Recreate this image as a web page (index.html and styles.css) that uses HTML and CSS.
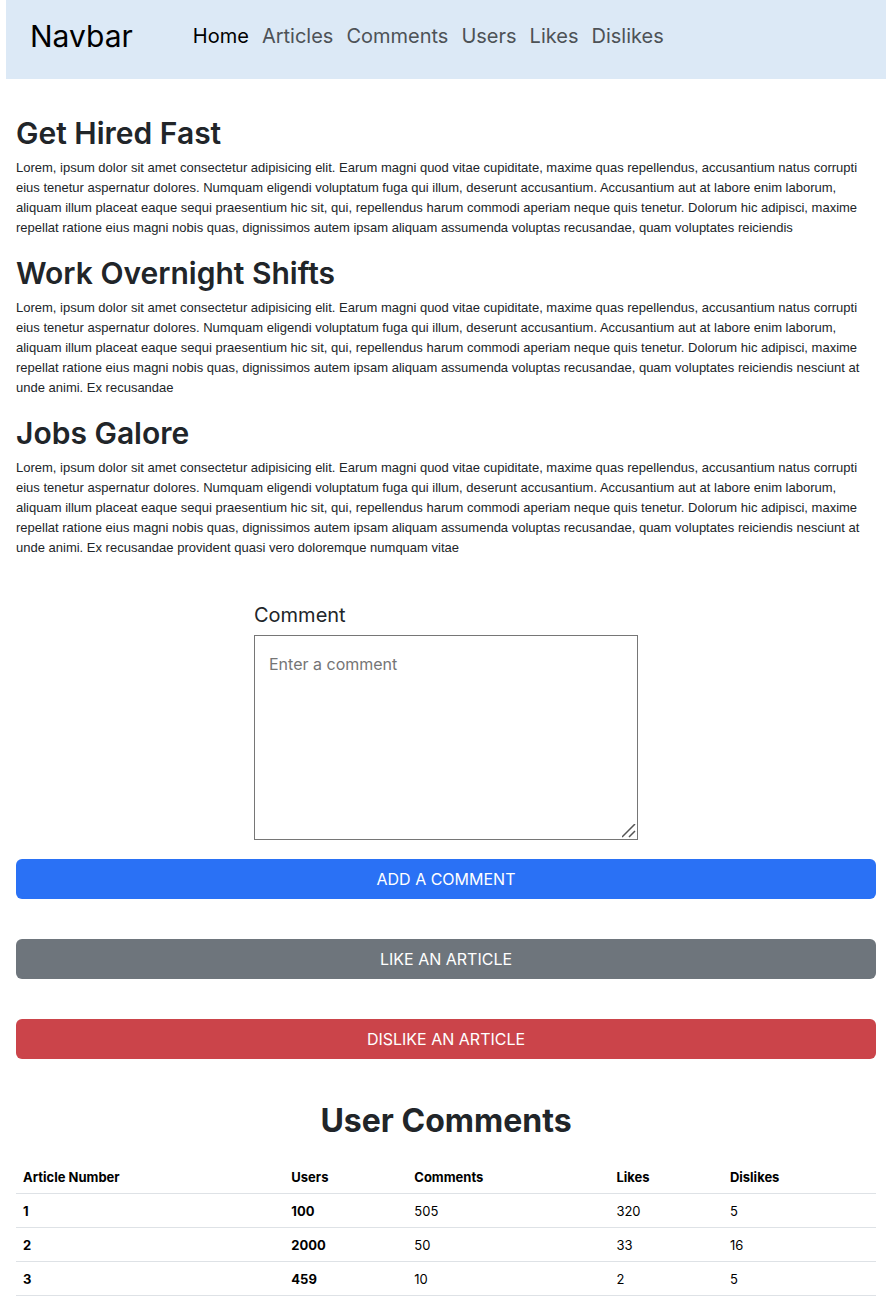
FILE: index.html
```html
<!DOCTYPE html>
<html lang="en">
<head>
<meta charset="utf-8">
<meta name="viewport" content="width=device-width, initial-scale=1">
<title>Articles</title>
<link rel="stylesheet" href="styles.css">
</head>
<body>
<nav class="navbar">
  <a class="brand" href="#">Navbar</a>
  <ul class="nav-list">
    <li><a class="nav-link active" href="#">Home</a></li>
    <li><a class="nav-link" href="#">Articles</a></li>
    <li><a class="nav-link" href="#">Comments</a></li>
    <li><a class="nav-link" href="#">Users</a></li>
    <li><a class="nav-link" href="#">Likes</a></li>
    <li><a class="nav-link" href="#">Dislikes</a></li>
  </ul>
</nav>
<main class="content">
  <article class="article">
    <h2 class="title">Get Hired Fast</h2>
    <p class="text">Lorem, ipsum dolor sit amet consectetur adipisicing elit. Earum magni quod vitae cupiditate, maxime quas repellendus, accusantium natus corrupti eius tenetur aspernatur dolores. Numquam eligendi voluptatum fuga qui illum, deserunt accusantium. Accusantium aut at labore enim laborum, aliquam illum placeat eaque sequi praesentium hic sit, qui, repellendus harum commodi aperiam neque quis tenetur. Dolorum hic adipisci, maxime repellat ratione eius magni nobis quas, dignissimos autem ipsam aliquam assumenda voluptas recusandae, quam voluptates reiciendis</p>
  </article>
  <article class="article">
    <h2 class="title">Work Overnight Shifts</h2>
    <p class="text">Lorem, ipsum dolor sit amet consectetur adipisicing elit. Earum magni quod vitae cupiditate, maxime quas repellendus, accusantium natus corrupti eius tenetur aspernatur dolores. Numquam eligendi voluptatum fuga qui illum, deserunt accusantium. Accusantium aut at labore enim laborum, aliquam illum placeat eaque sequi praesentium hic sit, qui, repellendus harum commodi aperiam neque quis tenetur. Dolorum hic adipisci, maxime repellat ratione eius magni nobis quas, dignissimos autem ipsam aliquam assumenda voluptas recusandae, quam voluptates reiciendis nesciunt at unde animi. Ex recusandae</p>
  </article>
  <article class="article">
    <h2 class="title">Jobs Galore</h2>
    <p class="text">Lorem, ipsum dolor sit amet consectetur adipisicing elit. Earum magni quod vitae cupiditate, maxime quas repellendus, accusantium natus corrupti eius tenetur aspernatur dolores. Numquam eligendi voluptatum fuga qui illum, deserunt accusantium. Accusantium aut at labore enim laborum, aliquam illum placeat eaque sequi praesentium hic sit, qui, repellendus harum commodi aperiam neque quis tenetur. Dolorum hic adipisci, maxime repellat ratione eius magni nobis quas, dignissimos autem ipsam aliquam assumenda voluptas recusandae, quam voluptates reiciendis nesciunt at unde animi. Ex recusandae provident quasi vero doloremque numquam vitae</p>
  </article>
  <form class="comment-form">
    <div class="field">
      <label class="label" for="comment">Comment</label>
      <textarea class="comment" id="comment" placeholder="Enter a comment"></textarea>
    </div>
    <button class="btn primary" type="button">ADD A COMMENT</button>
    <button class="btn secondary" type="button">LIKE AN ARTICLE</button>
    <button class="btn danger" type="button">DISLIKE AN ARTICLE</button>
  </form>
  <h2 class="table-title">User Comments</h2>
  <table class="table">
    <colgroup><col class="c-article"><col class="c-users"><col class="c-comments"><col class="c-likes"><col></colgroup>
    <thead>
      <tr><th scope="col">Article Number</th><th scope="col">Users</th><th scope="col">Comments</th><th scope="col">Likes</th><th scope="col">Dislikes</th></tr>
    </thead>
    <tbody>
      <tr><th scope="row">1</th><th>100</th><td>505</td><td>320</td><td>5</td></tr>
      <tr><th scope="row">2</th><th>2000</th><td>50</td><td>33</td><td>16</td></tr>
      <tr><th scope="row">3</th><th>459</th><td>10</td><td>2</td><td>5</td></tr>
    </tbody>
  </table>
</main>
</body>
</html>
```
FILE: styles.css
```css
* { box-sizing: border-box; }

body {
  margin: 0 10px 0 6px;
  background: #fff;
  color: #212529;
  font: 13px/20px Inter, "Liberation Sans", sans-serif;
}

.navbar {
  display: flex;
  align-items: center;
  gap: 60px;
  padding: 11px 24px 18px;
  background: #dce9f6;
}

.brand {
  color: #000;
  font-size: 30px;
  line-height: 50px;
  text-decoration: none;
}

.nav-list {
  display: flex;
  gap: 13px;
  margin: 0;
  padding: 0;
  list-style: none;
}

.nav-link {
  color: #4d5256;
  font-size: 20px;
  line-height: 30px;
  text-decoration: none;
}

.nav-link.active { color: #000; }

.content { padding: 34px 10px 16px; }

.article { margin-bottom: 15px; }

.title {
  margin: 0 0 5px;
  font-size: 30px;
  font-weight: 600;
  line-height: 40px;
}

.text {
  margin: 0;
  font-family: "Liberation Sans", Arial, sans-serif;
}

.comment-form {
  display: flex;
  flex-direction: column;
  gap: 40px;
  padding-top: 27px;
}

.field {
  display: flex;
  flex-direction: column;
  gap: 5px;
  width: 384px;
  max-width: 100%;
  margin: 0 auto -21px;
}

.label {
  font-size: 20px;
  line-height: 30px;
}

.comment {
  width: 100%;
  height: 205px;
  padding: 16px 14px;
  border: 1px solid #767676;
  border-radius: 0;
  background: #fff;
  font: 16px/24px Inter, "Liberation Sans", sans-serif;
}

.comment::placeholder { color: #757575; }

.comment::-webkit-resizer {
  background: url("data:image/svg+xml,%3Csvg xmlns='http://www.w3.org/2000/svg' width='15' height='15' viewBox='0 0 15 15'%3E%3Cpath d='M0 13L13 0M7 13L13 7' stroke='%23555' stroke-width='1.5'/%3E%3C/svg%3E") no-repeat right bottom;
}

.btn {
  height: 40px;
  border: 0;
  border-radius: 6px;
  color: #fff;
  font: 16px/24px Inter, "Liberation Sans", sans-serif;
}

.primary { background: #2a71f5; }
.secondary { background: #6e757c; }
.danger { background: #cb444a; }

.table-title {
  margin: 42px 0 19px;
  font-size: 32px;
  font-weight: 700;
  line-height: 40px;
  text-align: center;
}

.table {
  width: 100%;
  border-collapse: collapse;
  table-layout: fixed;
  color: #000;
}

.table th,
.table td {
  padding: 7px 7px 6px;
  border-bottom: 1px solid #dee2e6;
  text-align: left;
}

.c-article { width: 31.2%; }
.c-users { width: 14.3%; }
.c-comments { width: 23.5%; }
.c-likes { width: 13.2%; }
```
